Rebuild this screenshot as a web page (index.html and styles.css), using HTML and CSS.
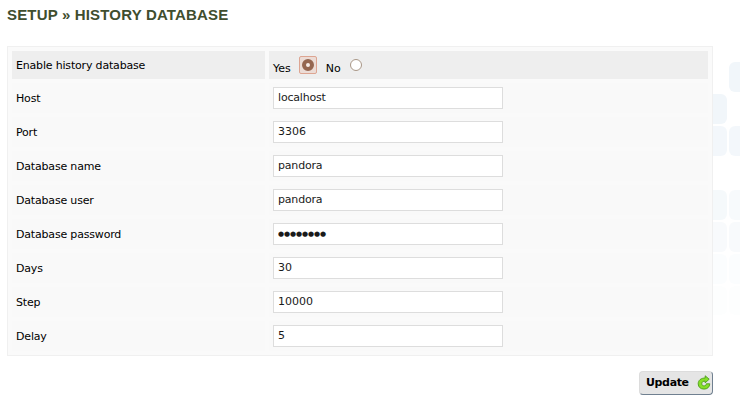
FILE: index.html
```html
<!DOCTYPE html>
<html lang="en">
<head>
<meta charset="utf-8">
<title>Setup » History database</title>
<link rel="stylesheet" href="styles.css">
</head>
<body>
<svg class="backdrop" width="27" height="260" viewBox="713 60 27 260" aria-hidden="true">
  <g fill="#f1f6fa">
    <rect x="729" y="62" width="30" height="30" rx="6"/>
    <rect x="697" y="94" width="30" height="30" rx="6"/>
    <rect x="697" y="126" width="30" height="30" rx="6" opacity=".85"/>
    <rect x="729" y="126" width="30" height="30" rx="6" opacity=".85"/>
    <rect x="697" y="190" width="30" height="30" rx="6" opacity=".7"/>
    <rect x="729" y="190" width="30" height="30" rx="6" opacity=".6"/>
    <rect x="697" y="222" width="30" height="30" rx="6" opacity=".5"/>
    <rect x="729" y="222" width="30" height="30" rx="6" opacity=".5"/>
    <rect x="697" y="254" width="30" height="30" rx="6" opacity=".25"/>
    <rect x="729" y="254" width="30" height="30" rx="6" opacity=".25"/>
    <rect x="697" y="286" width="30" height="29" rx="6" opacity=".15"/>
    <rect x="729" y="286" width="30" height="29" rx="6" opacity=".15"/>
  </g>
</svg>
<main class="page">
  <h1 class="title">SETUP » HISTORY DATABASE</h1>
  <form class="setup">
    <div class="panel">
      <div class="label head">Enable history database</div>
      <div class="field head choices">
        <span>Yes</span><span class="focus"><input class="radio on" type="radio" name="enabled" aria-label="Yes" checked></span>
        <span>No</span><input class="radio" type="radio" name="enabled" aria-label="No">
      </div>
      <label class="label" for="host">Host</label><div class="field"><input class="text" id="host" value="localhost"></div>
      <label class="label" for="port">Port</label><div class="field"><input class="text number" id="port" value="3306"></div>
      <label class="label" for="name">Database name</label><div class="field"><input class="text" id="name" value="pandora"></div>
      <label class="label" for="user">Database user</label><div class="field"><input class="text" id="user" value="pandora"></div>
      <label class="label" for="pass">Database password</label><div class="field"><input class="text password" id="pass" value="●●●●●●●●"></div>
      <label class="label" for="days">Days</label><div class="field"><input class="text number" id="days" value="30"></div>
      <label class="label" for="step">Step</label><div class="field"><input class="text number" id="step" value="10000"></div>
      <label class="label" for="delay">Delay</label><div class="field"><input class="text number" id="delay" value="5"></div>
    </div>
    <div class="actions">
      <button class="update" type="button">Update
        <svg width="14" height="15" viewBox="0 0 14 15" aria-hidden="true">
          <path d="M8.200.800 12.200 4.200 8.200 7.800V6.200C6 6 4.800 7 4.800 8.700c0 1.400 1 2.200 2.300 2.200 1.300 0 2-.7 2.200-2.100h3.500c-.2 3.300-2.500 5.300-5.800 5.300C3.500 14.100 1.200 12 1.200 8.800 1.200 5.300 3.900 3 8.200 3z" fill="#86e028" stroke="#4c9c18" stroke-width=".9" stroke-linejoin="round"/>
        </svg>
      </button>
    </div>
  </form>
</main>
</body>
</html>
```
FILE: styles.css
```css
* { box-sizing: border-box; }

body {
  margin: 0;
  background: #fff;
  color: #000;
  font: 11px/14px "DejaVu Sans", sans-serif;
}

.backdrop {
  position: absolute;
  top: 60px;
  left: 713px;
}

.page {
  width: 706px;
  margin-left: 7px;
  padding-top: 6px;
}

.title {
  margin: 0 0 22px;
  color: #3f4e2f;
  font: bold 15px/18px "Liberation Sans", Arial, sans-serif;
  letter-spacing: .17px;
  white-space: nowrap;
}

.panel {
  display: grid;
  grid-template-columns: 253px 439px;
  grid-template-rows: 28px;
  grid-auto-rows: 30px;
  gap: 4px;
  padding: 4px;
  border: 1px solid #f0f0f0;
  background: #fafafa;
}

.label,
.field {
  display: flex;
  align-items: center;
  padding: 0 4px;
  background: #f9f9f9;
}

.label {
  padding-top: 2px;
  letter-spacing: -.18px;
}

.panel .head { background: #eee; }

.choices { align-items: flex-start; }

.choices > span:not(.focus) { margin-top: 11px; }

.focus {
  display: flex;
  width: 18px;
  height: 18px;
  margin: 5px 9px 0 8px;
  padding: 2px;
  border: 1px solid #dda592;
  border-radius: 2px;
  background: #ecdcd6;
}

.radio {
  appearance: none;
  width: 12px;
  height: 12px;
  margin: 8px 0 0 9px;
  border: 1px solid #a99787;
  border-radius: 50%;
  background: #fff;
}

.radio.on {
  margin: 0;
  border: 4px solid #956650;
  outline: 0;
  background: #f7ece8;
}

.text {
  width: 230px;
  height: 22px;
  margin: 0;
  padding: 0 4px 2px;
  border: 1px solid #ddd;
  border-radius: 0;
  background: #fff;
  color: #1a1a1a;
  font: inherit;
  letter-spacing: -.18px;
}

.text.number { letter-spacing: 0; }

.text.password {
  padding-bottom: 1px;
  font-size: 7px;
  letter-spacing: -.1px;
}

.actions {
  display: flex;
  justify-content: flex-end;
  margin-top: 15px;
}

.update {
  display: flex;
  align-items: center;
  justify-content: space-between;
  width: 74px;
  height: 24px;
  padding: 0 1px 1px 6px;
  border: 1px solid #dcdcdc;
  border-right-color: #708090;
  border-bottom-color: #708090;
  border-radius: 4px;
  background: #e5e5e5;
  color: #000;
  font: bold 11px/14px "DejaVu Sans", sans-serif;
  letter-spacing: -.35px;
}
```
